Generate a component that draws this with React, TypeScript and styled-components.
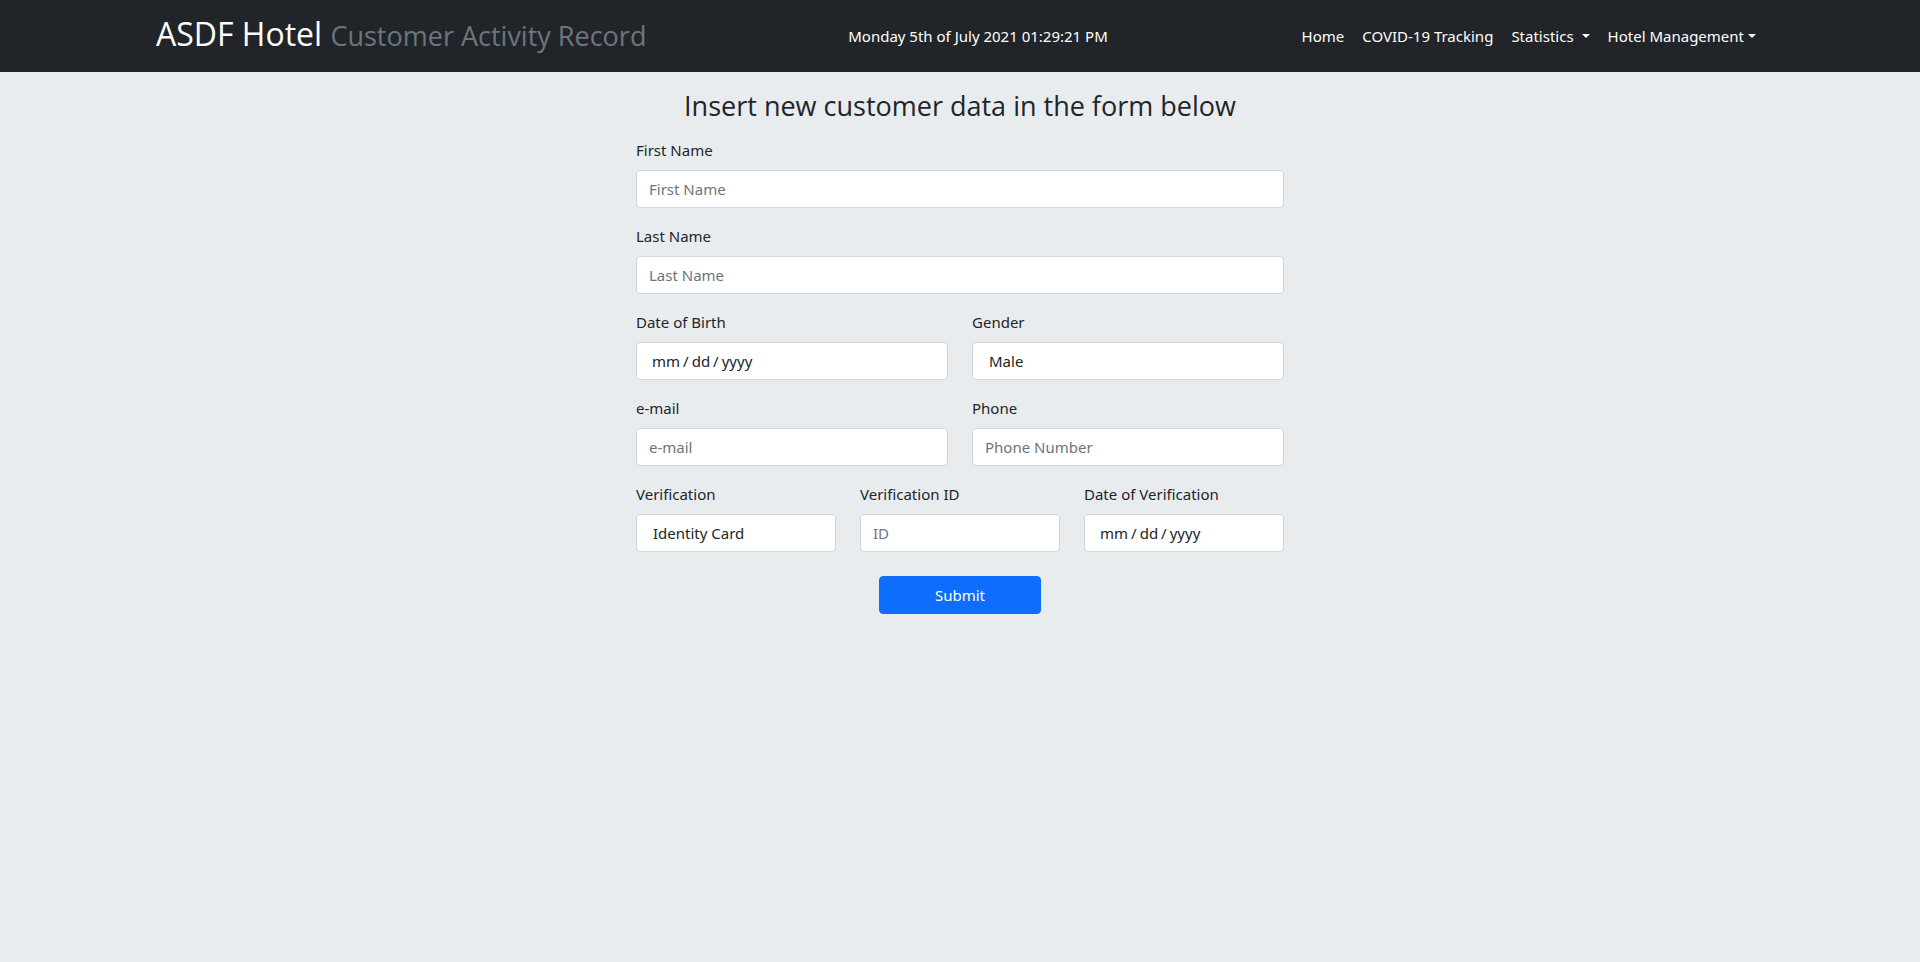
import React from 'react';
import styled, { createGlobalStyle, css } from 'styled-components';

const headingFont = '"Open Sans", "Noto Sans", sans-serif';
const bodyFont = '"Noto Sans", "Open Sans", sans-serif';

const GlobalStyle = createGlobalStyle`
  *, *::before, *::after { box-sizing: border-box; }
  body {
    margin: 0;
    background: #e9ecef;
    color: #212529;
    font-family: ${bodyFont};
    font-size: 15px;
    line-height: 24px;
  }
`;

const Header = styled.header`
  background: #212529;
`;

const Navbar = styled.div`
  display: flex;
  align-items: center;
  justify-content: space-between;
  width: 85%;
  min-height: 72px;
  margin: 0 auto;
  padding: 8px 12px;
`;

const Brand = styled.a`
  margin-right: 16px;
  color: #fff;
  font-family: ${headingFont};
  font-size: 32px;
  line-height: 38px;
  padding-bottom: 2px;
  text-decoration: none;
  white-space: nowrap;
`;

const Tagline = styled.small`
  color: #6c757d;
  font-size: 27px;
`;

const Clock = styled.time`
  color: #fff;
  white-space: nowrap;
`;

const NavList = styled.nav`
  display: flex;
  gap: 2px;
`;

const navItem = css`
  display: flex;
  align-items: center;
  padding: 8px;
  color: #fff;
  white-space: nowrap;
`;

const NavLink = styled.a`
  ${navItem}
  text-decoration: none;
`;

const NavToggle = styled.button<{ $wide?: boolean }>`
  ${navItem}
  gap: ${p => (p.$wide ? 8 : 4)}px;
  border: 0;
  background: none;
  font: inherit;
  cursor: pointer;

  &::after {
    content: '';
    border: 4px solid transparent;
    border-top-color: #fff;
    border-bottom: 0;
  }
`;

const Main = styled.main`
  width: 35%;
  min-width: 480px;
  margin: 0 auto;
  padding: 16px 12px;
`;

const Title = styled.h1`
  margin: 0 0 14px;
  font-family: ${headingFont};
  font-size: 27px;
  font-weight: 400;
  line-height: 36px;
  text-align: center;
`;

const Form = styled.form`
  display: flex;
  flex-direction: column;
  gap: 16px;
`;

const Row = styled.div`
  display: grid;
  grid-auto-flow: column;
  grid-auto-columns: minmax(0, 1fr);
  gap: 24px;
`;

const Field = styled.div`
  display: flex;
  flex-direction: column;
  gap: 8px;
`;

const control = css`
  width: 100%;
  height: 38px;
  margin: 0;
  border: 1px solid #ced4da;
  border-radius: 4px;
  background: #fff;
  color: #212529;
  font: inherit;
  appearance: none;
`;

const Input = styled.input`
  ${control}
  padding: 6px 12px;

  &::placeholder { color: #6c757d; opacity: 1; }
`;

const DateInput = styled.input`
  ${control}
  padding: 6px 14px;

  &::-webkit-calendar-picker-indicator { display: none; }
  &::-webkit-datetime-edit { padding: 0; }
  &::-webkit-datetime-edit-text { padding: 0 2px; }
`;

const Select = styled.select`
  ${control}
  padding: 6px 16px;
`;

const Submit = styled.button`
  align-self: center;
  width: 25%;
  height: 38px;
  margin-top: 8px;
  border: 1px solid #0d6efd;
  border-radius: 4px;
  background: #0d6efd;
  color: #fff;
  font: inherit;
  cursor: pointer;
`;

export default function App() {
  return (
    <>
      <GlobalStyle />
      <Header>
        <Navbar>
          <Brand href="#">
            ASDF Hotel <Tagline>Customer Activity Record</Tagline>
          </Brand>
          <Clock dateTime="2021-07-05T13:29:21">Monday 5th of July 2021 01:29:21 PM</Clock>
          <NavList>
            <NavLink href="#">Home</NavLink>
            <NavLink href="#">COVID-19 Tracking</NavLink>
            <NavToggle type="button" $wide>Statistics</NavToggle>
            <NavToggle type="button">Hotel Management</NavToggle>
          </NavList>
        </Navbar>
      </Header>
      <Main>
        <Title>Insert new customer data in the form below</Title>
        <Form onSubmit={e => e.preventDefault()}>
          <Field>
            <label htmlFor="firstName">First Name</label>
            <Input id="firstName" type="text" placeholder="First Name" />
          </Field>
          <Field>
            <label htmlFor="lastName">Last Name</label>
            <Input id="lastName" type="text" placeholder="Last Name" />
          </Field>
          <Row>
            <Field>
              <label htmlFor="birthDate">Date of Birth</label>
              <DateInput id="birthDate" type="date" />
            </Field>
            <Field>
              <label htmlFor="gender">Gender</label>
              <Select id="gender">
                <option>Male</option>
                <option>Female</option>
              </Select>
            </Field>
          </Row>
          <Row>
            <Field>
              <label htmlFor="email">e-mail</label>
              <Input id="email" type="email" placeholder="e-mail" />
            </Field>
            <Field>
              <label htmlFor="phone">Phone</label>
              <Input id="phone" type="tel" placeholder="Phone Number" />
            </Field>
          </Row>
          <Row>
            <Field>
              <label htmlFor="verification">Verification</label>
              <Select id="verification">
                <option>Identity Card</option>
                <option>Passport</option>
              </Select>
            </Field>
            <Field>
              <label htmlFor="verificationId">Verification ID</label>
              <Input id="verificationId" type="text" placeholder="ID" />
            </Field>
            <Field>
              <label htmlFor="verificationDate">Date of Verification</label>
              <DateInput id="verificationDate" type="date" />
            </Field>
          </Row>
          <Submit type="submit">Submit</Submit>
        </Form>
      </Main>
    </>
  );
}
